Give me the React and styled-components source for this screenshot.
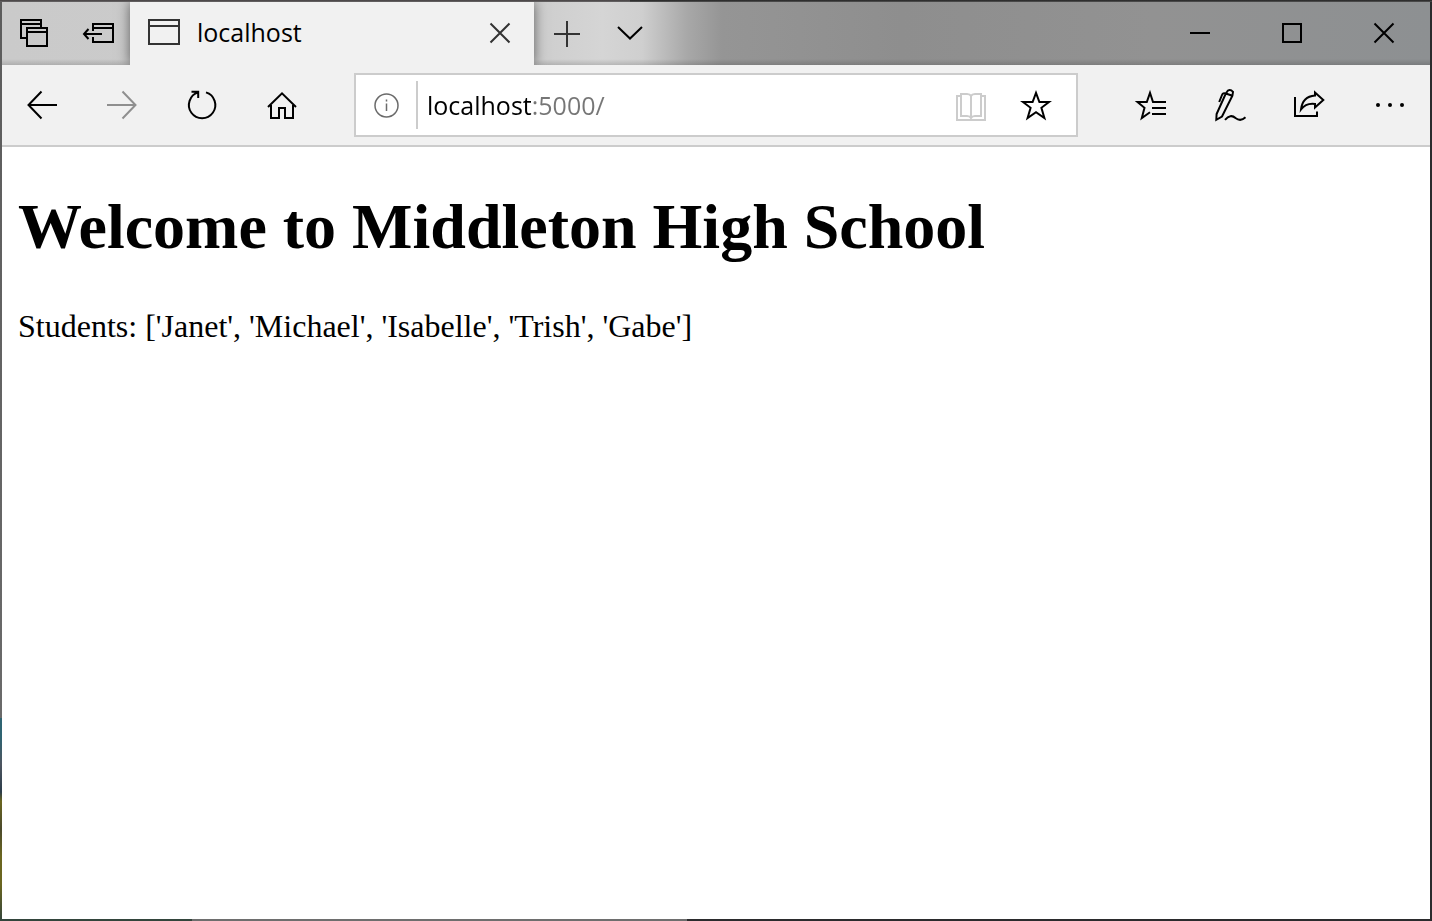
import React from "react";
import styled, { createGlobalStyle } from "styled-components";

const GlobalStyle = createGlobalStyle`
  *, *::before, *::after { box-sizing: border-box; }
  body { margin: 0; background: #fff; }
`;

const uiFont = `"Segoe UI", "Open Sans", "Noto Sans", sans-serif`;

const Window = styled.div`
  display: flex;
  flex-direction: column;
  min-height: 100vh;
  padding: 2px;
  background:
    linear-gradient(#443f40, #6a6869) top left / 44% 2px no-repeat,
    linear-gradient(#222, #555) top right / 56% 2px no-repeat,
    linear-gradient(to right, #33453c 192px, #6e6e6e 192px 48%, #2b2b2d 48%) bottom left / 100% 2px no-repeat,
    linear-gradient(#5c5c5c, #6a6a6a 78%, #2f6472 78%, #2f6472 80%, #4d5560 83%, #2c3d4a 86%, #6b6620 87%, #4b4a2c 90%, #6b6620 93%, #6b6620 96%, #33453c) top left / 2px 100% no-repeat,
    #2b2b2d;
`;

const TitleBar = styled.header`
  display: flex;
  height: 63px;
  flex: none;
  overflow: hidden;
  background:
    linear-gradient(to top, rgba(0, 0, 0, 0.14), transparent 6px),
    linear-gradient(to right, #cacaca, #cdcdcd 530px, #d5d5d5 600px, #cfcfcf 640px, #a8a8a8 685px, #959595 720px, #8e8e8e 900px, #929292 1150px, #8d9092);
`;

const Tab = styled.div`
  display: flex;
  align-items: flex-start;
  width: 404px;
  padding-left: 18px;
  background: #f1f1f1;
  box-shadow: 0 0 12px rgba(0, 0, 0, 0.55);
`;

const Favicon = styled.svg`
  width: 32px;
  height: 26px;
  margin: 17px 17px 0 0;
  fill: none;
  stroke: #333;
  stroke-width: 2;
`;

const TabTitle = styled.span`
  flex: 1;
  font: 25px/32px ${uiFont};
  margin-top: 14px;
  color: #000;
`;

const WindowControls = styled.div`
  display: flex;
  margin-left: auto;
`;

const Button = styled.button`
  display: flex;
  justify-content: center;
  flex: none;
  width: ${(p) => p.$width}px;
  padding: 0;
  border: 0;
  background: none;
  color: ${(p) => p.$color || "#000"};
`;

const TitleButton = styled(Button)`
  align-items: flex-start;
  padding-top: 8px;
`;

const ToolButton = styled(Button)`
  align-items: center;
  align-self: stretch;
`;

const Glyph = styled.svg`
  flex: none;
  width: 48px;
  height: 48px;
  fill: none;
  stroke: currentColor;
  stroke-width: ${(p) => p.$weight || 2};
  stroke-miterlimit: 8;
`;

const Toolbar = styled.nav`
  display: flex;
  align-items: center;
  flex: none;
  height: 82px;
  background: #f1f1f1;
  border-bottom: 2px solid #ccc;
`;

const AddressBar = styled.div`
  display: flex;
  align-items: center;
  flex: 1;
  min-width: 0;
  height: 64px;
  margin: 0 32px;
  padding-right: 8px;
  background: #fff;
  border: 2px solid #ccc;
`;

const Divider = styled.span`
  flex: none;
  width: 2px;
  height: 48px;
  background: #ccc;
`;

const AddressInput = styled.input`
  flex: 1;
  min-width: 0;
  height: 48px;
  padding: 0 9px;
  border: 0;
  outline: 0;
  font: 25px/32px ${uiFont};
  color: transparent;
  caret-color: #000;
  background: linear-gradient(to right, #000 114px, #767676 114px);
  background-clip: text;
  -webkit-background-clip: text;
`;

const Page = styled.main`
  flex: 1;
  padding: 43px 16px;
  background: #fff;
  color: #000;
  font: 32px/38px "Times New Roman", "Liberation Serif", serif;
`;

const Heading = styled.h1`
  margin: 0 0 43px;
  font-size: 64px;
  line-height: 74px;
`;

const Paragraph = styled.p`
  margin: 0;
`;

const icons = {
  tabsAside: <path d="M31 17V10H11V28H17M11 14H31M17 18H37V36H17ZM17 22H37" />,
  setAside: <path d="M19 21V14H39V32H19V27M19 18H39M10 24H28M14.5 19L10 24L14.5 29" />,
  closeTab: <path d="M14.5 13.5L33.5 32.5M33.5 13.5L14.5 32.5" />,
  plus: <path d="M11 24H37M24 11V37" />,
  chevron: <path d="M12 17L24 28.5L36 17" />,
  minimize: <path d="M14 23H34" />,
  maximize: <path d="M15 14H33V32H15Z" />,
  back: <path d="M39 24H11M23.5 10.5L10.5 24L23.5 37.5" />,
  forward: <path d="M9 24H37M24.5 10.5L37.5 24L24.5 37.5" />,
  refresh: <path d="M28 11.4A13.2 13.2 0 1 1 20.2 11.4M13.5 10.8H20.2V17" />,
  home: <path d="M10 26L24 12.3L38 26M13 24V37H21V27H27V37H35V24" />,
  info: (
    <>
      <circle cx="24.5" cy="24.5" r="11.5" />
      <path d="M24.5 22.5V30M24.5 18.5V20.5" />
    </>
  ),
  book: (
    <path d="M13 15H9V39H37V15H33M13 13H19Q22 13 23 15Q24 13 27 13H33V35H27Q24 35 23 37Q22 35 19 35H13ZM23 14V37" />
  ),
  star: <path d="M24 11.8L27.4 21H37L29.4 26.8L32.4 37L24 31.2L15.6 37L18.6 26.8L11 21H20.6Z" />,
  favorites: (
    <path d="M40 21H27L24 11.8L20.8 21H11.5L18.5 26.8L15.8 37L24 31.2M26 27H40M26 33H40" />
  ),
  notes: (
    <path d="M10.3 38.8L10.6 33L19.8 12.5L22 9.5Q24.5 8 27 10.8L26.4 14.8L16 35.5ZM19.8 12.5L26.4 14.8M19.5 12.5Q17 11.5 16 14L13.2 21M19 38.8Q24.5 32.5 29.5 37Q34.5 41 39.5 36.3" />
  ),
  share: (
    <path d="M9 16V35H31V30.5M29 11.5L37.3 19L29 26.5V23Q20 21.8 15 28.5Q16.5 15.5 29 14.5Z" />
  ),
  more: (
    <g fill="currentColor" stroke="none">
      <circle cx="12" cy="24" r="2" />
      <circle cx="24" cy="24" r="2" />
      <circle cx="36" cy="24" r="2" />
    </g>
  ),
};

function Icon({ name, weight }) {
  return (
    <Glyph viewBox="0 0 48 48" $weight={weight} aria-hidden="true">
      {icons[name]}
    </Glyph>
  );
}

function TitleAction({ icon, label, width, color, weight }) {
  return (
    <TitleButton type="button" aria-label={label} $width={width} $color={color}>
      <Icon name={icon} weight={weight} />
    </TitleButton>
  );
}

function ToolAction({ icon, label, width = 80, color, weight }) {
  return (
    <ToolButton type="button" aria-label={label} $width={width} $color={color}>
      <Icon name={icon} weight={weight} />
    </ToolButton>
  );
}

export default function App() {
  return (
    <>
      <GlobalStyle />
      <Window>
        <TitleBar>
          <TitleAction icon="tabsAside" label="Tabs you've set aside" width={64} />
          <TitleAction icon="setAside" label="Set these tabs aside" width={64} />
          <Tab>
            <Favicon viewBox="0 0 32 26" aria-hidden="true">
              <path d="M1 1H31V25H1ZM1 7H31" />
            </Favicon>
            <TabTitle>localhost</TabTitle>
            <TitleAction icon="closeTab" label="Close tab" width={68} color="#333" />
          </Tab>
          <TitleAction icon="plus" label="New tab" width={66} color="#333" />
          <TitleAction icon="chevron" label="Show tab previews" width={60} />
          <WindowControls>
            <TitleAction icon="minimize" label="Minimize" width={92} />
            <TitleAction icon="maximize" label="Maximize" width={92} />
            <TitleAction icon="closeTab" label="Close" width={92} />
          </WindowControls>
        </TitleBar>
        <Toolbar aria-label="Browser">
          <ToolAction icon="back" label="Back" />
          <ToolAction icon="forward" label="Forward" color="#8f8f8f" />
          <ToolAction icon="refresh" label="Refresh" />
          <ToolAction icon="home" label="Home" />
          <AddressBar>
            <ToolAction icon="info" label="Site information" width={60} color="#6b6b6b" weight={1.5} />
            <Divider />
            <AddressInput type="text" aria-label="Address" defaultValue="localhost:5000/" spellCheck={false} />
            <ToolAction icon="book" label="Reading view" width={64} color="#ccc" />
            <ToolAction icon="star" label="Add to favorites" width={64} />
          </AddressBar>
          <ToolAction icon="favorites" label="Favorites" />
          <ToolAction icon="notes" label="Add notes" />
          <ToolAction icon="share" label="Share" />
          <ToolAction icon="more" label="Settings and more" />
        </Toolbar>
        <Page>
          <Heading>Welcome to Middleton High School</Heading>
          <Paragraph>Students: ['Janet', 'Michael', 'Isabelle', 'Trish', 'Gabe']</Paragraph>
        </Page>
      </Window>
    </>
  );
}
